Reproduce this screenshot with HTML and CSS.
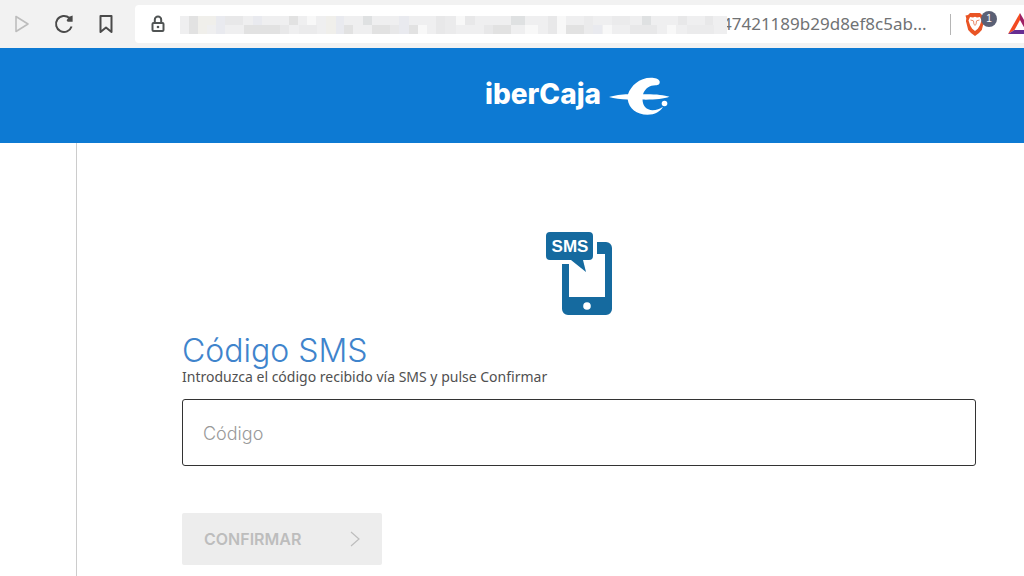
FILE: index.html
```
<!DOCTYPE html>
<html lang="es">

<head>
    <meta charset="UTF-8">
    <title>Código SMS</title>
    <link rel="stylesheet" href="styles.css">
</head>

<body>
    <div class="toolbar">
        <div class="nav">
            <button type="button" aria-label="Adelante">
                <svg width="20" height="24" viewBox="0 0 20 24"><path d="M4 4.500v15L16 12z" fill="none" stroke="#bdbdbd" stroke-width="1.600" stroke-linejoin="round"/></svg>
            </button>
            <button type="button" aria-label="Recargar">
                <svg width="20" height="24" viewBox="0 0 20 24"><path d="M17.600 14.500A8 8 0 1 1 15.400 6" fill="none" stroke="#4a4a4a" stroke-width="2"/><path d="M18.600 3.500v6.300h-5l-1-1.600 2.600-3.400z" fill="#4a4a4a"/></svg>
            </button>
            <button type="button" aria-label="Marcador">
                <svg width="20" height="24" viewBox="0 0 20 24"><path d="M4.500 4h11v16l-5.500-4.500L4.500 20z" fill="none" stroke="#4a4a4a" stroke-width="2" stroke-linejoin="round"/></svg>
            </button>
        </div>
        <div class="address">
            <svg class="lock" width="14" height="18" viewBox="0 0 14 18"><path d="M3.800 8V4.800a3.200 3.200 0 0 1 6.400 0V8" fill="none" stroke="#505454" stroke-width="2"/><rect x="1.500" y="8" width="11" height="8" rx="1" fill="none" stroke="#505454" stroke-width="2"/><circle cx="7" cy="12" r="1.300" fill="#505454"/></svg>
            <svg class="mosaic" height="18" viewBox="0 0 546 18" preserveAspectRatio="none" shape-rendering="crispEdges">
                <path fill="#efeff0" d="M0 0h546v18H0z"/>
                <path fill="#e2e2e2" d="M9 0h9v18H9zM64 9h36v9H64zM109 0h9v9h-9zM164 9h9v9h-9zM192 9h18v9h-18zM229 9h9v9h-9zM312 9h18v9h-18zM385 9h18v9h-18z"/>
                <path fill="#dfe1e2" d="M330 0h14v9h-14zM461 0h9v9h-9zM183 0h9v9h-9z"/>
                <path fill="#e8e8e9" d="M45 0h18v9H45zM100 9h9v9h-9zM210 9h9v9h-9zM256 0h9v18h-9zM284 0h10v9h-10zM303 9h9v9h-9zM367 0h9v18h-9zM449 9h27v9h-27zM497 0h9v9h-9zM524 0h8v9h-8z"/>
                <path fill="#e9eaef" d="M36 0h9v18h-9zM73 0h9v9h-9zM156 0h8v18h-8zM219 0h10v18h-10zM412 9h9v9h-9z"/>
                <path fill="#f0efeb" d="M18 0h9v18h-9zM27 0h9v9h-9zM146 0h10v18h-10z"/>
                <path fill="#f8f8f8" d="M376 0h9v18h-9zM275 0h9v9h-9zM344 9h13v9h-13zM422 9h9v9h-9zM486 9h9v9h-9zM238 9h9v9h-9zM127 0h9v9h-9z"/>
                <path fill="#ebebec" d="M119 9h18v9h-18zM265 0h10v18h-10zM403 0h9v18h-9zM431 0h18v9h-18zM506 9h27v9h-27z"/>
            </svg>
            <input class="url" type="text" aria-label="Dirección" value="47421189b29d8ef8c5ab..." readonly>
            <span class="divider"></span>
            <button type="button" class="shield" aria-label="Escudo: 1">
                <svg width="20" height="24" viewBox="0 0 20 24"><path d="M5 1h10l2 2 2.500.5-.8 3 .4 2.500-2.300 9L14 21l-4 3-4-3-2.800-3-2.300-9 .4-2.500-.8-3L3 3z" fill="#e95425"/><path d="M5 5l3 .5 2-.7 2 .7 3-.5 1.500 3.500-1.700 5-2 3.300L10 19l-2.800-2.200-2-3.300-1.700-5z" fill="#fff"/><path d="M5.500 8l3 .8M14.500 8l-3 .8M8.500 9l.5 3.500 1 .8 1-.8.5-3.500" fill="none" stroke="#e98a6a" stroke-width="1"/></svg>
                <span class="badge">1</span>
            </button>
            <svg class="triangle" width="24" height="22" viewBox="0 0 24 22"><path d="M12 0L0 21l6.500-4L12 7z" fill="#f24a22"/><path d="M12 0l12 21-6.500-4L12 7z" fill="#9e1f63"/><path d="M0 21h24l-6.500-4h-11z" fill="#662d91"/></svg>
        </div>
    </div>

    <header class="header">
        <a class="logo" href="#" aria-label="iberCaja">
            <span>iberCaja</span>
            <svg width="62" height="38" viewBox="0 0 62 38"><path d="M0 20c5-1.600 13-2.600 19-2.800C22 9 30 .8 42 .8c4 0 7.500 1.200 8.500 3.200.8 2.200-.5 4.200-3 4.200-6-.4-11.500 2.800-13.500 9 12-.2 21 .6 26.500 2.600-6 2.200-16 3-27 2.800.2 6.500 4 10.600 10 10.600 4 0 7.500-1.400 10.500-3.400-2.500 4.600-8 8-15.500 8-11 0-18.500-6-19.800-15.200C12 22.400 5 21.600 0 20z" fill="#fff"/><circle cx="55.500" cy="26.500" r="2.800" fill="#fff"/></svg>
        </a>
    </header>

    <main class="content">
        <svg class="sms-icon" width="68" height="86" viewBox="0 0 68 86">
            <path d="M52 11h9a6 6 0 0 1 6 6v61a6 6 0 0 1-6 6H23a6 6 0 0 1-6-6V33h7v33h36V23h-8z" fill="#156a9f"/>
            <path d="M5 1h39a4 4 0 0 1 4 4v20a4 4 0 0 1-4 4h-6l3 12-15-12H5a4 4 0 0 1-4-4V5a4 4 0 0 1 4-4z" fill="#156a9f"/>
            <circle cx="42" cy="75" r="3.800" fill="#fff"/>
            <text x="25" y="21" text-anchor="middle" class="sms-text">SMS</text>
        </svg>
        <form class="form">
            <h1>Código SMS</h1>
            <label for="codigo">Introduzca el código recibido vía SMS y pulse Confirmar</label>
            <input id="codigo" type="text" placeholder="Código">
            <button type="button" class="confirm" disabled>
                <span>CONFIRMAR</span>
                <svg width="12" height="18" viewBox="0 0 12 18"><path d="M2 2l8 7-8 7" fill="none" stroke="#bdbdbd" stroke-width="1.200"/></svg>
            </button>
        </form>
    </main>
</body>

</html>
```
FILE: styles.css
```
* {
    box-sizing: border-box;
}

body {
    margin: 0;
    background-color: #fff;
    font-family: Inter, "Liberation Sans", sans-serif;
    overflow: hidden;
}

button {
    border: 0;
    padding: 0;
    background: none;
}

svg {
    display: block;
    flex-shrink: 0;
}

.toolbar {
    display: flex;
    height: 48px;
    padding: 5px 0;
    background-color: #f2f2f2;
}

.nav {
    display: flex;
    align-items: center;
    gap: 22px;
    padding: 0 19px 0 12px;
}

.address {
    flex: 1;
    display: flex;
    align-items: center;
    min-width: 0;
    padding-left: 16px;
    border-radius: 4px 0 0 4px;
    background-color: #fff;
    overflow: hidden;
}

.mosaic {
    position: relative;
    flex: 1;
    min-width: 0;
    margin: 2px -5px 0 15px;
}

.url {
    width: 210px;
    border: 0;
    padding: 0 0 2px;
    background: none;
    color: #707274;
    font-family: "Noto Sans", sans-serif;
    font-size: 17px;
    outline: none;
}

.divider {
    width: 1px;
    height: 21px;
    margin: 0 14px 0 18px;
    background-color: #b5b5b5;
}

.shield {
    position: relative;
}

.badge {
    position: absolute;
    top: -1px;
    left: 16px;
    width: 16px;
    height: 16px;
    border-radius: 8px;
    background-color: #5b6075;
    color: #fff;
    font-size: 10px;
    line-height: 16px;
}

.triangle {
    margin: 0 -8px 0 23px;
}

.header {
    display: flex;
    justify-content: center;
    align-items: center;
    height: 95px;
    padding-left: 132px;
    background-color: #0d7ad3;
}

.logo {
    display: flex;
    align-items: center;
    gap: 8px;
    color: #fff;
    font-size: 28px;
    font-weight: 800;
    line-height: 28px;
    text-decoration: none;
}

.logo span {
    padding-bottom: 4px;
}

.content {
    min-height: 433px;
    margin-left: 76px;
    padding: 88px 48px 10px 105px;
    border-left: 1px solid #ccc;
}

.sms-icon {
    margin: 0 auto;
}

.sms-text {
    fill: #fff;
    font-family: "Liberation Sans", sans-serif;
    font-size: 17px;
    font-weight: bold;
}

.form h1 {
    margin: 15px 0 0;
    color: #3f84cc;
    font-size: 32px;
    font-weight: 300;
    line-height: 37px;
}

.form label {
    display: block;
    color: #505050;
    font-family: "Noto Sans", sans-serif;
    font-size: 14px;
    line-height: 16px;
}

.form input {
    display: block;
    width: 100%;
    height: 67px;
    margin: 14px 0 47px;
    padding: 2px 20px 0;
    border: 1px solid #333;
    border-radius: 3px;
    font-family: inherit;
    font-size: 18px;
}

.form input::placeholder {
    color: #999;
    font-weight: 300;
}

.confirm {
    display: flex;
    justify-content: space-between;
    align-items: center;
    width: 200px;
    height: 52px;
    padding: 0 21px 0 22px;
    border-radius: 2px;
    background-color: #ededed;
    color: #bdbdbd;
    font-family: inherit;
    font-size: 16px;
    font-weight: 600;
}
```
